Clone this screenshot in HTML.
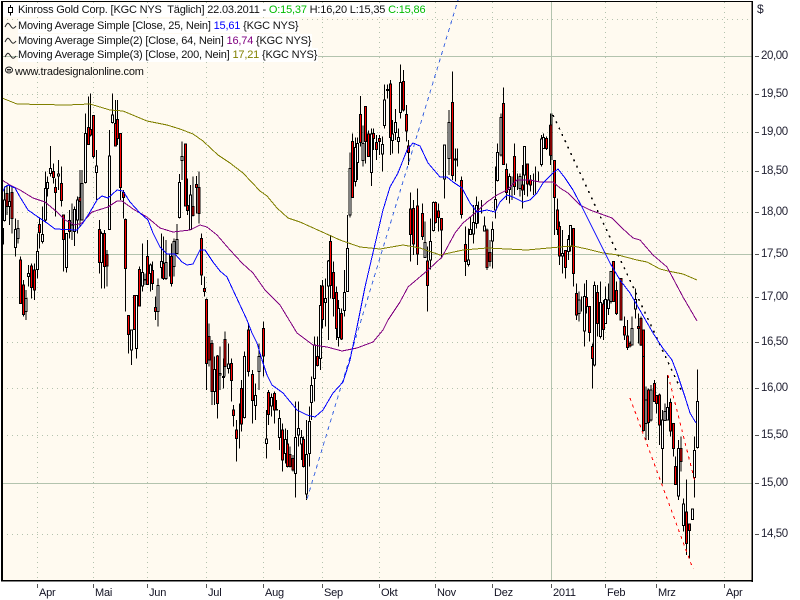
<!DOCTYPE html>
<html><head><meta charset="utf-8"><style>
html,body{margin:0;padding:0;background:#fff}
body{width:800px;height:600px;position:relative;overflow:hidden;font-family:"Liberation Sans",sans-serif;font-size:11px;letter-spacing:-.18px;color:#111}
svg{position:absolute;left:0;top:0}
.t{position:absolute;white-space:pre;line-height:14px;height:14px}
.l{background:#fff;padding-right:1px}
.p{left:761px;font-size:11.5px;letter-spacing:-.4px;color:#223}
.m{top:586px;font-size:11px;letter-spacing:-.2px;color:#112}
</style></head><body>
<svg width="800" height="600" viewBox="0 0 800 600">
<rect x="1" y="1" width="751" height="579" fill="#fffaf0"/>
<g fill="none" shape-rendering="crispEdges">
<path stroke="#b3c3ae" stroke-dasharray="1 4" d="M2 19.5H752M2 94.5H752M2 132.5H752M2 171.5H752M2 212.5H752M2 297.5H752M2 342.5H752M2 388.5H752M2 435.5H752M2 534.5H752"/>
<path stroke="#b3c3ae" stroke-dasharray="1 4" d="M37.5 2V580M93.5 2V580M147.5 2V580M206.5 2V580M263.5 2V580M322.5 2V580M379.5 2V580M435.5 2V580M492.5 2V580M605.5 2V580M656.5 2V580M724.5 2V580"/>
<path stroke="#b3c3ae" d="M2 56.5H752M2 254.5H752M2 483.5H752M551.5 2V580"/>
</g>
<g shape-rendering="crispEdges" fill="none" stroke="#000" stroke-width="3">
<g transform="translate(0,100) scale(.3334)">
<path d="M8 380V485M13 260V365M21 255V345M28 255V375M36 260V400M46 355V470M54 360V430M62 470V612M70 540V650M78 570V660M86 495V560M94 490V595M103 490V600M112 400V535M118 355V445M127 320V430M136 215V365M142 230V290M152 138V230M160 190V250M167 235V350M175 180V270M184 200V320M191 345V515M199 400V518M208 330V415M216 310V420M224 320V438M232 290V400M240 210V380M246 210V360M256 40V250M265 -10V135M272 -20V110M280 45V175M289 150V300M298 360V520M305 395V565M313 390V565M321 450V560M328 90V390M337 -20V70M347 0V140M352 0V135M361 100V300M370 270V355M377 355V635M386 645V760M394 690V795M403 585V690M409 585V775M418 500V620M427 430V575M435 520V555M443 420V555M451 490V575M458 485V570M466 590V660M474 535V680M484 400V535M491 410V540M498 420V540M508 460V530M514 430V560M522 415V530M531 372V460M538 222V355M546 125V240M556 130V320M563 235V345M572 255V390M579 230V350M590 228V340M597 215V370"/>
<path fill="#fff" d="M10 300h6V362h-6zM25 305h6V320h-6zM43 388h6V443h-6zM51 385h6V415h-6zM75 595h6V635h-6zM83 520h6V530h-6zM109 455h6V508h-6zM124 403h6V425h-6zM133 265h6V360h-6zM139 247h6V265h-6zM149 205h6V220h-6zM172 222h6V228h-6zM196 400h6V503h-6zM213 375h6V390h-6zM221 328h6V395h-6zM229 300h6V360h-6zM243 250h6V360h-6zM253 100h6V248h-6zM286 198h6V218h-6zM302 400h6V488h-6zM325 168h6V388h-6zM334 45h6V68h-6zM391 690h6V750h-6zM406 587h6V745h-6zM424 517h6V558h-6zM432 538h6V540h-6zM448 495h6V520h-6zM471 556h6V634h-6zM481 485h6V502h-6zM495 488h6V535h-6zM519 425h6V500h-6zM528 418h6V460h-6zM535 247h6V352h-6zM543 170h6V182h-6zM569 285h6V388h-6z"/>
<path fill="#f00" d="M5 385h6V432h-6zM18 280h6V320h-6zM33 278h6V355h-6zM59 480h6V610h-6zM67 555h6V643h-6zM91 498h6V562h-6zM100 510h6V570h-6zM115 373h6V398h-6zM157 215h6V232h-6zM164 262h6V278h-6zM181 250h6V302h-6zM188 345h6V418h-6zM205 362h6V395h-6zM237 292h6V305h-6zM262 82h6V133h-6zM269 88h6V105h-6zM277 47h6V170h-6zM295 388h6V488h-6zM310 400h6V500h-6zM318 463h6V498h-6zM344 70h6V138h-6zM349 58h6V115h-6zM358 100h6V262h-6zM367 278h6V293h-6zM374 358h6V505h-6zM383 647h6V703h-6zM400 587h6V688h-6zM415 508h6V618h-6zM440 470h6V553h-6zM455 512h6V550h-6zM463 622h6V635h-6zM488 490h6V535h-6zM511 470h6V550h-6zM553 132h6V318h-6zM560 317h6V332h-6zM576 320h6V346h-6zM587 253h6V262h-6zM594 262h6V340h-6z"/>
</g>
<g transform="translate(200,220) scale(.3334)">
<path d="M4 40V195M13 170V230M19 235V510M27 310V440M36 360V555M44 410V555M52 405V595M60 380V510M70 415V505M75 335V470M85 370V460M94 415V545M100 555V620M109 600V725M118 550V685M125 480V635M133 395V595M146 310V470M157 450V610M166 490V600M177 370V510M190 305V470M199 570V715M205 510V615M214 520V590M223 515V610M230 540V570M238 570V690M247 610V755M256 625V730M263 630V742M270 680V742M279 705V755M287 545V832M295 545V680M304 630V720M311 650V742M320 600V840M328 560V740M335 470V600M344 350V545M352 350V440M361 195V450M368 180V325M376 175V320M386 120V360M392 45V235M400 125V290M409 200V360M416 240V380M425 265V360M434 150V290M442 -15V215"/>
<path fill="#fff" d="M41 448h6V515h-6zM57 460h6V465h-6zM67 470h6V472h-6zM82 432h6V445h-6zM130 410h6V593h-6zM163 527h6V556h-6zM174 410h6V455h-6zM196 657h6V670h-6zM211 532h6V558h-6zM227 568h6V570h-6zM235 596h6V652h-6zM253 658h6V700h-6zM284 652h6V760h-6zM292 625h6V645h-6zM301 652h6V672h-6zM317 703h6V822h-6zM325 605h6V700h-6zM332 497h6V547h-6zM341 375h6V475h-6zM358 257h6V415h-6zM373 235h6V247h-6zM383 123h6V198h-6zM413 265h6V352h-6zM431 217h6V272h-6zM439 85h6V215h-6z"/>
<path fill="#f00" d="M1 55h6V165h-6zM10 205h6V215h-6zM16 238h6V430h-6zM24 350h6V420h-6zM33 370h6V515h-6zM49 408h6V550h-6zM72 358h6V440h-6zM91 430h6V482h-6zM97 570h6V587h-6zM106 630h6V655h-6zM122 505h6V612h-6zM143 330h6V455h-6zM154 463h6V542h-6zM187 325h6V408h-6zM202 517h6V583h-6zM220 520h6V570h-6zM244 630h6V720h-6zM260 672h6V740h-6zM267 703h6V740h-6zM276 715h6V750h-6zM308 658h6V740h-6zM349 410h6V437h-6zM365 198h6V298h-6zM389 65h6V197h-6zM397 157h6V235h-6zM406 217h6V325h-6zM422 280h6V357h-6z"/>
</g>
<g transform="translate(340,60) scale(.3334)">
<path d="M30 278V472M38 220V410M46 232V380M53 232V360M61 108V260M69 197V320M76 140V310M85 212V290M94 205V378M100 205V270M109 225V300M118 225V285M127 230V335M134 73V205M143 73V115M152 60V285M158 180V280M166 147V240M175 205V280M182 13V175M190 30V155M199 135V245M205 240V315M212 397V605M221 420V585M232 385V615M247 430V540M255 485V580M262 560V755M271 475V628M280 425V515M287 425V490M296 430V515M304 475V595M313 255V415M327 150V345M337 35V360M346 265V365M353 265V320M365 350V475M377 500V648M385 505V620M391 470V525M401 435V550M409 410V505M416 425V490M424 420V460M433 470V515M441 505V630M450 540V620M458 485V625M467 320V475M472 250V365M483 160V290M491 83V315M500 310V420M508 340V430M516 350V420M524 250V405M532 340V390M540 340V410M548 315V445M554 258V405M562 310V410M571 345V395M580 340V405M587 320V400M595 335V365M604 225V320M611 220V260M620 230V270M632 160V315"/>
<path fill="#fff" d="M27 325h6V465h-6zM43 262h6V365h-6zM50 250h6V308h-6zM66 250h6V302h-6zM91 222h6V338h-6zM124 253h6V282h-6zM131 120h6V197h-6zM140 88h6V92h-6zM155 222h6V242h-6zM163 187h6V217h-6zM172 232h6V245h-6zM179 67h6V157h-6zM252 547h6V592h-6zM268 545h6V600h-6zM277 427h6V512h-6zM310 255h6V357h-6zM324 187h6V295h-6zM343 297h6V300h-6zM382 600h6V613h-6zM388 508h6V523h-6zM398 488h6V522h-6zM406 437h6V490h-6zM430 498h6V513h-6zM455 508h6V543h-6zM464 418h6V450h-6zM469 278h6V362h-6zM480 172h6V285h-6zM505 350h6V388h-6zM537 350h6V385h-6zM551 260h6V345h-6zM601 237h6V313h-6zM608 232h6V265h-6z"/>
<path fill="#f00" d="M35 245h6V412h-6zM58 163h6V248h-6zM73 140h6V245h-6zM82 222h6V290h-6zM97 220h6V235h-6zM106 247h6V268h-6zM115 235h6V245h-6zM149 72h6V232h-6zM187 65h6V150h-6zM196 163h6V213h-6zM202 258h6V277h-6zM209 447h6V523h-6zM218 445h6V552h-6zM229 438h6V582h-6zM244 460h6V530h-6zM259 603h6V677h-6zM284 428h6V487h-6zM293 453h6V472h-6zM301 476h6V510h-6zM334 127h6V347h-6zM362 362h6V463h-6zM374 553h6V605h-6zM438 510h6V622h-6zM447 577h6V605h-6zM488 130h6V313h-6zM497 328h6V398h-6zM521 290h6V380h-6zM545 375h6V390h-6zM559 312h6V372h-6zM568 360h6V375h-6zM617 235h6V265h-6zM629 197h6V285h-6z"/>
</g>
<g transform="translate(540,110) scale(.3334)">
<path d="M36 10V150M44 150V375M52 265V375M59 335V465M67 360V490M76 420V505M85 375V450M91 345V425M100 355V530M110 520V630M117 545V635M125 560V605M133 520V710M139 510V610M148 590V695M157 700V835M163 515V770M172 525V680M182 515V685M190 570V690M197 530V615M205 520V615M213 485V580M220 455V575M229 515V615M243 505V630M253 620V690M262 630V720M270 695V712M276 620V690M287 535V625M296 610V700M303 620V708"/>
<path fill="#fff" d="M64 430h6V438h-6zM82 388h6V425h-6zM88 347h6V410h-6zM114 570h6V610h-6zM130 560h6V663h-6zM160 527h6V765h-6zM179 578h6V680h-6zM194 568h6V640h-6zM202 570h6V595h-6zM210 485h6V575h-6zM273 655h6V705h-6zM284 568h6V597h-6z"/>
<path fill="#f00" d="M30 45h6V137h-6zM41 152h6V262h-6zM49 300h6V358h-6zM56 350h6V438h-6zM73 422h6V472h-6zM97 355h6V490h-6zM107 550h6V615h-6zM136 562h6V590h-6zM145 590h6V667h-6zM154 710h6V745h-6zM169 548h6V640h-6zM187 582h6V658h-6zM217 455h6V575h-6zM226 542h6V610h-6zM240 505h6V630h-6zM250 650h6V675h-6zM259 678h6V712h-6zM267 700h6V708h-6zM293 650h6V655h-6zM300 625h6V705h-6zM308 660h6V875h-6z"/>
</g>
<g transform="translate(620,360) scale(.3334)">
<path d="M71 -10V215M78 80V240M86 85V240M93 75V185M104 60V125M110 105V160M118 100V255M127 150V370M135 130V182M143 45V180M151 115V230M160 190V290M167 290V375M175 240V420M183 230V335M191 415V515M199 358V585M208 490V595M217 447V478M223 230V412M232 28V265"/>
<path fill="#fff" d="M75 120h6V190h-6zM90 90h6V180h-6zM124 180h6V265h-6zM132 155h6V182h-6zM140 142h6V180h-6zM172 265h6V408h-6zM188 432h6V497h-6zM214 447h6V478h-6zM220 272h6V352h-6zM229 125h6V263h-6z"/>
<path fill="#f00" d="M68 -10h6V212h-6zM83 90h6V188h-6zM101 70h6V125h-6zM107 107h6V130h-6zM115 105h6V195h-6zM148 127h6V213h-6zM157 190h6V265h-6zM164 320h6V373h-6zM180 265h6V305h-6zM196 456h6V550h-6zM205 492h6V512h-6z"/>
</g>
</g>
<g fill="none" stroke-width="1" shape-rendering="crispEdges">
<path stroke="#4169e1" stroke-dasharray="4 4" d="M307 499L458 0"/>
<path stroke="#000" stroke-width="1.5" stroke-dasharray="2 5" d="M553 115L682 392"/>
<path stroke="#f00" stroke-dasharray="3 4" d="M630 398L693 569M668 375L695 482"/>
<path stroke="#808000" d="M2 98L17 104L67 105L90 104L110 110L123 111L147 121L167 125L180 129L193 134L203 141L218 155L230 163L243 173L260 191L267 196L277 208L288 218L300 222L320 231L340 240L360 247L380 249L403 245L420 248L440 255L463 250L487 248L527 250L560 247L573 246L587 249L603 253L618 255L637 260L647 262L660 269L668 271L683 274L697 280"/>
<path stroke="#800080" d="M2 180L10 185L20 190L33 198L45 202L57 212L65 220L75 225L82 223L92 212L108 207L117 201L122 201L133 209L147 217L160 228L173 232L190 230L200 225L207 227L217 235L230 250L242 263L253 273L265 290L280 305L297 333L313 345L327 347L342 351L357 348L373 342L383 330L388 320L400 302L408 287L428 270L442 257L455 233L463 223L475 213L487 202L497 195L507 190L517 180L530 180L540 182L553 182L560 188L568 193L580 205L590 210L612 218L622 228L633 238L640 240L653 255L667 267L675 282L683 297L697 321"/>
<path stroke="#00f" d="M2 193L5 187L8 185L15 188L20 197L28 210L38 217L47 223L55 229L77 230L83 223L90 212L97 200L102 196L108 198L117 190L123 191L130 202L140 213L148 220L153 233L160 247L167 254L175 254L182 262L187 265L193 264L200 250L205 250L213 262L220 271L227 277L233 290L240 305L247 320L252 333L257 343L262 360L267 375L272 385L283 393L297 410L307 415L315 417L323 410L333 393L343 382L350 360L357 327L365 287L372 257L383 210L390 187L398 173L407 150L413 143L420 146L428 163L440 177L447 177L453 182L462 188L470 203L477 212L487 210L495 212L500 202L507 195L513 197L523 202L530 200L537 193L543 183L553 173L558 169L565 178L573 190L582 207L590 223L600 243L610 263L620 280L630 293L653 333L662 347L672 360L677 373L685 397L690 413L696 423"/>
</g>
<path fill="#000" d="M1 1h751v1H1zM1 1h2v579H1zM1 580h752v1.500H1zM751.500 1h1.500v581h-1.500z"/>
<path stroke="#555" fill="none" shape-rendering="crispEdges" d="M755 56.500h4M755 94.500h4M755 132.500h4M755 171.500h4M755 212.500h4M755 254.500h4M755 297.500h4M755 342.500h4M755 388.500h4M755 435.500h4M755 483.500h4M755 534.500h4M37.500 584v4M93.500 584v4M147.500 584v4M206.500 584v4M263.500 584v4M322.500 584v4M379.500 584v4M435.500 584v4M492.500 584v4M551.500 584v4M605.500 584v4M656.500 584v4M724.500 584v4"/>
</svg>
<div class="t l" style="left:18px;top:3px">Kinross Gold Corp. [KGC NYS  Täglich] 22.03.2011 - <span style="color:#0b0">O:15,37</span> H:16,20 L:15,35 <span style="color:#0b0">C:15,86</span></div>
<div class="t l" style="left:18px;top:19px">Moving Average Simple [Close, 25, Nein] <span style="color:#00f">15,61</span> {KGC NYS}</div>
<div class="t l" style="left:18px;top:34px">Moving Average Simple(2) [Close, 64, Nein] <span style="color:#800080">16,74</span> {KGC NYS}</div>
<div class="t l" style="left:18px;top:48px">Moving Average Simple(3) [Close, 200, Nein] <span style="color:#808000">17,21</span> {KGC NYS}</div>
<div class="t" style="left:15px;top:65px">www.tradesignalonline.com</div>
<svg width="20" height="80" viewBox="0 0 20 80" style="left:0;top:0">
<rect x="3" y="3" width="15" height="14" fill="#fff"/>
<path fill="#fff" stroke="#000" shape-rendering="crispEdges" d="M8.500 7.500h4v5h-4z"/>
<path stroke="#000" fill="none" shape-rendering="crispEdges" d="M10.500 5v2.500M10.500 12.500v3"/>
<g fill="none" stroke="#222"><path d="M5 27c2-4 3-5 5-2s3 5 6 1"/><path d="M5 42c2-4 3-5 5-2s3 5 6 1"/><path d="M5 57c2-4 3-5 5-2s3 5 6 1"/>
<ellipse cx="9" cy="70" rx="3.500" ry="3"/><path d="M7 69.500h4M7 71h4"/></g>
</svg>
<div class="t" style="left:757px;top:2px;font-size:12px;color:#223">$</div>
<div class="t p" style="top:49px">20,00</div>
<div class="t p" style="top:87px">19,50</div>
<div class="t p" style="top:125px">19,00</div>
<div class="t p" style="top:164px">18,50</div>
<div class="t p" style="top:205px">18,00</div>
<div class="t p" style="top:247px">17,50</div>
<div class="t p" style="top:290px">17,00</div>
<div class="t p" style="top:335px">16,50</div>
<div class="t p" style="top:381px">16,00</div>
<div class="t p" style="top:428px">15,50</div>
<div class="t p" style="top:476px">15,00</div>
<div class="t p" style="top:527px">14,50</div>
<div class="t m" style="left:39px">Apr</div>
<div class="t m" style="left:95px">Mai</div>
<div class="t m" style="left:149px">Jun</div>
<div class="t m" style="left:208px">Jul</div>
<div class="t m" style="left:265px">Aug</div>
<div class="t m" style="left:324px">Sep</div>
<div class="t m" style="left:381px">Okt</div>
<div class="t m" style="left:437px">Nov</div>
<div class="t m" style="left:494px">Dez</div>
<div class="t m" style="left:553px">2011</div>
<div class="t m" style="left:607px">Feb</div>
<div class="t m" style="left:658px">Mrz</div>
<div class="t m" style="left:726px">Apr</div>
</body></html>
